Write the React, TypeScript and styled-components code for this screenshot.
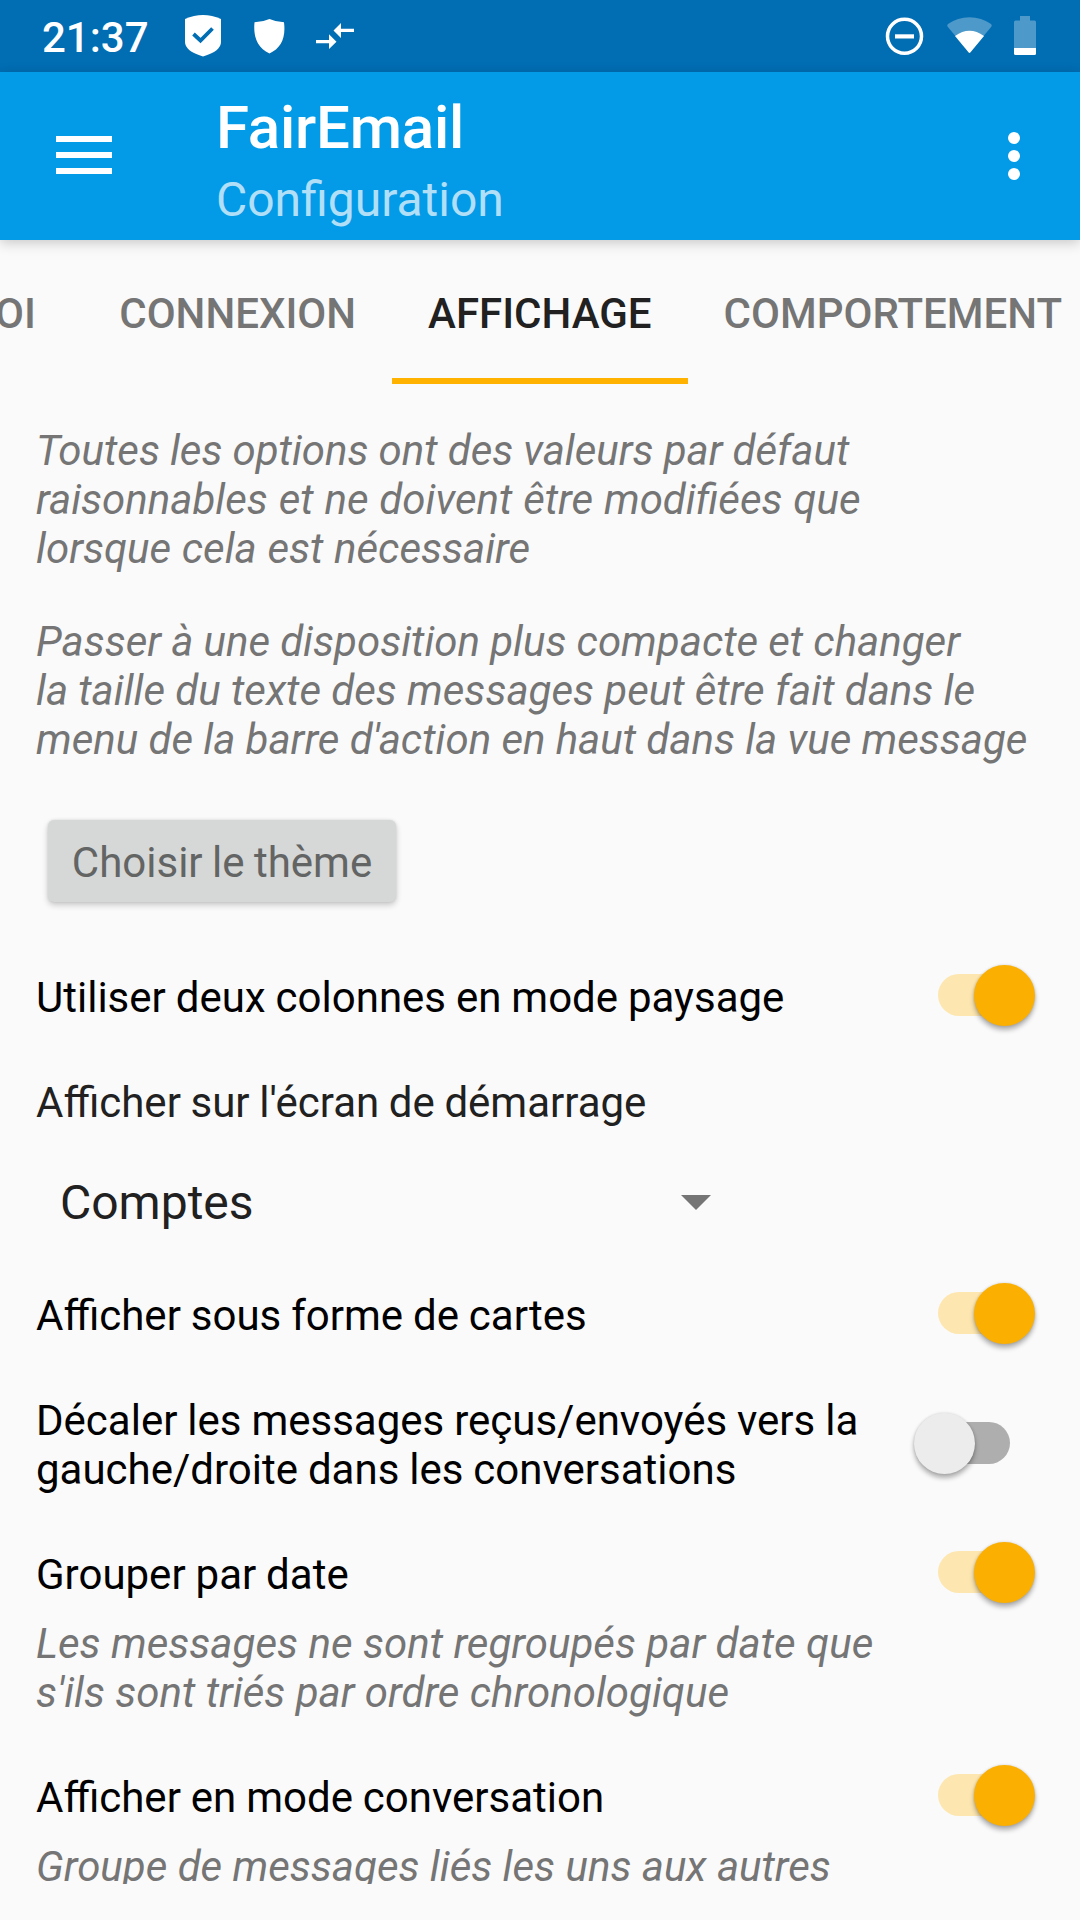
import React from 'react';
import styled, { createGlobalStyle, css } from 'styled-components';

const GlobalStyle = createGlobalStyle`
  *, *::before, *::after { box-sizing: border-box; }
  html, body { margin: 0; padding: 0; background: #fafafa; }
`;

const Screen = styled.div`
  display: flex;
  flex-direction: column;
  width: 1080px;
  height: 1920px;
  overflow: hidden;
  background: #fafafa;
  color: #000;
  font-family: Roboto, 'Noto Sans', sans-serif;
  font-size: 42px;
  line-height: 49px;
`;

const StatusBar = styled.header`
  display: flex;
  flex: none;
  align-items: center;
  height: 72px;
  padding: 0 44px 0 42px;
  background: #016db3;
  color: #fff;
`;

const Clock = styled.time`
  width: 126px;
  padding-top: 2px;
  font-weight: 500;
`;

const StatusIcons = styled.div`
  display: flex;
  align-items: center;
  height: 72px;
  svg { display: block; }
`;

const Spacer = styled.div`
  flex: 1;
`;

const AppBar = styled.div`
  display: flex;
  flex: none;
  align-items: center;
  height: 168px;
  padding: 0 48px 0 56px;
  background: #039be7;
  color: #fff;
  box-shadow: 0 3px 12px rgba(0, 0, 0, 0.2);
  z-index: 1;
`;

const MenuButton = styled.button`
  display: flex;
  flex-direction: column;
  gap: 10px;
  width: 160px;
  padding: 0 0 2px;
  border: 0;
  background: none;
`;

const MenuLine = styled.span`
  width: 56px;
  height: 6px;
  background: #fff;
`;

const Titles = styled.div`
  flex: 1;
  padding-top: 12px;
`;

const Title = styled.h1`
  margin: 0;
  font-size: 60px;
  font-weight: 500;
  line-height: 70px;
  letter-spacing: -0.2px;
`;

const Subtitle = styled.p`
  margin: 0;
  padding-top: 5px;
  font-size: 48px;
  line-height: 64px;
  color: rgba(255, 255, 255, 0.7);
`;

const MoreButton = styled.button`
  display: flex;
  flex-direction: column;
  gap: 6px;
  width: 24px;
  align-items: center;
  padding: 0;
  border: 0;
  background: none;
  margin-right: 6px;
`;

const Dot = styled.span`
  width: 12px;
  height: 12px;
  border-radius: 50%;
  background: #fff;
`;

const Tabs = styled.nav`
  display: flex;
  flex: none;
  justify-content: flex-end;
  width: 1098px;
  height: 144px;
`;

const Tab = styled.div<{ $active?: boolean }>`
  flex: none;
  min-width: 216px;
  height: 144px;
  padding: 49px 36px 0;
  border-bottom: 6px solid transparent;
  font-weight: 500;
  text-align: center;
  white-space: nowrap;
  color: #757575;
  ${(p) => p.$active && css`
    color: #212121;
    border-bottom-color: #ffb300;
  `}
`;

const Content = styled.main`
  display: flex;
  flex-direction: column;
  height: 1500px;
  padding: 42px 36px 0;
  overflow: hidden;
`;

const Hint = styled.p<{ $top?: number }>`
  margin: ${(p) => p.$top ?? 0}px 0 0;
  font-style: italic;
  color: #757575;
`;

const Line = styled.span<{ $space?: number }>`
  display: block;
  white-space: nowrap;
  word-spacing: ${(p) => p.$space ?? 0}px;
`;

const ThemeButton = styled.button`
  flex: none;
  align-self: flex-start;
  width: 348px;
  height: 82px;
  margin: 56px 0 0 12px;
  padding: 2px 0 0;
  border: 0;
  border-radius: 6px;
  background: #d6d7d7;
  color: #636464;
  font: inherit;
  word-spacing: -1px;
  box-shadow: 0 3px 6px rgba(0, 0, 0, 0.2), 0 0 3px rgba(0, 0, 0, 0.1);
`;

const Row = styled.div<{ $top: number }>`
  display: flex;
  flex: none;
  align-items: center;
  justify-content: space-between;
  margin-top: ${(p) => p.$top}px;
`;

const Label = styled.span`
  white-space: pre-line;
  word-spacing: -0.5px;
`;

const SwitchTrack = styled.span<{ $on: boolean }>`
  display: flex;
  align-items: center;
  justify-content: ${(p) => (p.$on ? 'flex-end' : 'flex-start')};
  width: 86px;
  height: 42px;
  margin: -5px ${(p) => (p.$on ? 20 : 34)}px 0 0;
  border-radius: 21px;
  background: ${(p) => (p.$on ? '#fde6b0' : '#aeaeae')};
`;

const Thumb = styled.span<{ $on: boolean }>`
  flex: none;
  width: 61px;
  height: 61px;
  margin: 1px -10.5px 0;
  border-radius: 50%;
  background: ${(p) => (p.$on ? '#fbaf00' : '#ececec')};
  box-shadow: 0 4px 5px rgba(0, 0, 0, 0.3), 0 0 3px rgba(0, 0, 0, 0.14);
`;

const Caption = styled.div`
  flex: none;
  margin-top: 56px;
  color: #212121;
  word-spacing: -0.8px;
`;

const Select = styled.div`
  display: flex;
  flex: none;
  align-items: center;
  justify-content: space-between;
  width: 675px;
  height: 72px;
  margin-top: 39px;
  padding-left: 24px;
  font-size: 48px;
  color: #212121;
  svg { margin-top: 1px; }
`;

function Switch({ on }: { on: boolean }) {
  return (
    <SwitchTrack $on={on} role="switch" aria-checked={on}>
      <Thumb $on={on} />
    </SwitchTrack>
  );
}

function Option({ label, on, top = 56 }: { label: string; on: boolean; top?: number }) {
  return (
    <Row $top={top}>
      <Label>{label}</Label>
      <Switch on={on} />
    </Row>
  );
}

export default function App() {
  return (
    <>
      <GlobalStyle />
      <Screen>
        <StatusBar>
          <Clock>21:37</Clock>
          <StatusIcons>
            <svg width="190" height="72" viewBox="168 0 190 72" fill="#fff">
              <path d="M185 19 Q203 11 221 19 V42 Q221 51 203 56.5 Q185 51 185 42Z" />
              <path d="M193.5 34 L200.5 40.5 L212.5 28.5" fill="none" stroke="#016db3" strokeWidth="3.8" />
              <path d="M254.5 22.3 Q263 22 269.5 19 Q276 22 284 22.3 C286 38 281 48 269.5 53.5 C258 48 253 38 254.5 22.3Z" />
              <path d="M354 28.7 V32 H341 V38 L333.5 30.5 L341 23 V28.7Z M316 40 H329 V34.3 L336.5 41.7 L329 49 V43.3 H316Z" />
            </svg>
          </StatusIcons>
          <Spacer />
          <StatusIcons>
            <svg width="154" height="72" viewBox="882 0 154 72">
              <circle cx="904.5" cy="36.3" r="17" fill="none" stroke="#fff" strokeWidth="3.5" />
              <path d="M895 34.3 H914 V38.5 H895Z" fill="#fff" />
              <path d="M948 24 Q957.500 17.200 969.5 17.200 Q981.500 17.200 991 24 Q992.500 25.300 991.300 26.800 L969.5 53 L947.700 26.800 Q946.500 25.300 948 24Z" fill="#4d99ca" />
              <path d="M955 36 Q969.5 25.5 984 36 L970.3 52.5 Q969.5 53.3 968.7 52.5Z" fill="#fff" />
              <path d="M1020 16 H1030 V20.5 H1034.5 Q1036 20.5 1036 22 V48 H1014 V22 Q1014 20.5 1015.5 20.5 H1020Z" fill="#4d99ca" />
              <path d="M1014 48 H1036 V53.5 Q1036 55 1034.5 55 H1015.5 Q1014 55 1014 53.5Z" fill="#fff" />
            </svg>
          </StatusIcons>
        </StatusBar>
        <AppBar>
          <MenuButton aria-label="Menu">
            <MenuLine />
            <MenuLine />
            <MenuLine />
          </MenuButton>
          <Titles>
            <Title>FairEmail</Title>
            <Subtitle>Configuration</Subtitle>
          </Titles>
          <MoreButton aria-label="Plus">
            <Dot />
            <Dot />
            <Dot />
          </MoreButton>
        </AppBar>
        <Tabs>
          <Tab>ENVOI</Tab>
          <Tab>CONNEXION</Tab>
          <Tab $active>AFFICHAGE</Tab>
          <Tab>COMPORTEMENT</Tab>
        </Tabs>
        <Content>
          <Hint>
            <Line $space={-0.3}>Toutes les options ont des valeurs par défaut</Line>
            <Line $space={0.5}>raisonnables et ne doivent être modifiées que</Line>
            <Line $space={0.3}>lorsque cela est nécessaire</Line>
          </Hint>
          <Hint $top={44}>
            <Line $space={-0.2}>Passer à une disposition plus compacte et changer</Line>
            <Line $space={-0.1}>la taille du texte des messages peut être fait dans le</Line>
            <Line $space={-0.1}>menu de la barre d'action en haut dans la vue message</Line>
          </Hint>
          <ThemeButton>Choisir le thème</ThemeButton>
          <Option top={71} label="Utiliser deux colonnes en mode paysage" on />
          <Caption>Afficher sur l'écran de démarrage</Caption>
          <Select>
            Comptes
            <svg width="30" height="15" viewBox="0 0 30 15"><path d="M0 0H30L15 15Z" fill="#757575" /></svg>
          </Select>
          <Option top={53} label="Afficher sous forme de cartes" on />
          <Option label={"Décaler les messages reçus/envoyés vers la\ngauche/droite dans les conversations"} on={false} />
          <Option label="Grouper par date" on />
          <Hint $top={20}>
            <Line $space={0.1}>Les messages ne sont regroupés par date que</Line>
            <Line>s'ils sont triés par ordre chronologique</Line>
          </Hint>
          <Option label="Afficher en mode conversation" on />
          <Hint $top={20}>
            <Line>Groupe de messages liés les uns aux autres</Line>
          </Hint>
        </Content>
      </Screen>
    </>
  );
}
